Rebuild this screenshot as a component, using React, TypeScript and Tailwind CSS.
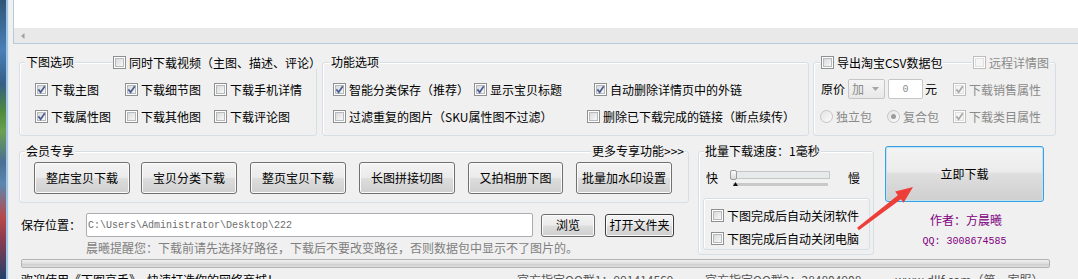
import type { ReactNode } from "react";

const cjk = "font-['Noto_Sans_CJK_SC','Noto_Sans',sans-serif]";
const mono = "font-['Liberation_Mono','DejaVu_Sans_Mono',monospace]";

function Box({ checked = false, disabled = false }: { checked?: boolean; disabled?: boolean }) {
  return (
    <span
      className={`relative block h-[13px] w-[13px] shrink-0 border bg-white p-px ${
        disabled ? "border-[#bdbdbd]" : "border-[#8e8f8f]"
      }`}
    >
      <span
        className={`block h-full w-full border ${
          disabled
            ? "border-[#e0e0e0] bg-[#f5f5f5]"
            : "border-[#b6b9bd] bg-[linear-gradient(135deg,#d9dadb,#f8f8f8)]"
        }`}
      />
      {checked && (
        <svg className="absolute left-0 top-0" width="11" height="11" viewBox="0 0 11 11">
          <path
            d="M2.4 5.4 L4.6 8.2 L8.8 2.2"
            fill="none"
            stroke={disabled ? "#a9a9a9" : "#4a5d92"}
            strokeWidth="1.7"
          />
        </svg>
      )}
    </span>
  );
}

function Check({
  label,
  checked,
  disabled,
  className = "",
}: {
  label: string;
  checked?: boolean;
  disabled?: boolean;
  className?: string;
}) {
  return (
    <label
      className={`flex h-[13px] items-center gap-[3px] whitespace-nowrap text-[12px] leading-[13px] ${
        disabled ? "text-[#8a8a8a]" : "text-black"
      } ${className}`}
    >
      <Box checked={checked} disabled={disabled} />
      <span>{label}</span>
    </label>
  );
}

function Radio({ label, checked, className = "" }: { label: string; checked?: boolean; className?: string }) {
  return (
    <label className={`flex h-[13px] items-center gap-[3px] whitespace-nowrap leading-[13px] text-[#8a8a8a] ${className}`}>
      <span className="flex h-[13px] w-[13px] shrink-0 items-center justify-center rounded-full border border-[#c4c4c4] bg-[linear-gradient(135deg,#e4e4e4,#fbfbfb)]">
        {checked && <span className="h-[5px] w-[5px] rounded-full bg-[#9c9c9c]" />}
      </span>
      <span>{label}</span>
    </label>
  );
}

function Group({
  title,
  titleLeft = "left-[5px]",
  className = "",
  extra,
  children,
}: {
  title: ReactNode;
  titleLeft?: string;
  className?: string;
  extra?: ReactNode;
  children?: ReactNode;
}) {
  return (
    <div className={`relative shrink-0 rounded-[3px] border border-[#d5dfe5] shadow-[inset_1px_1px_0_#ffffff] ${className}`}>
      <div className={`absolute -top-[7px] ${titleLeft} whitespace-nowrap bg-[#f0f0f0] px-px leading-[12px]`}>{title}</div>
      {extra}
      {children}
    </div>
  );
}

function Btn({ children, className = "" }: { children: ReactNode; className?: string }) {
  return (
    <button
      className={`flex shrink-0 items-center justify-center whitespace-nowrap rounded-[3px] border bg-[linear-gradient(to_bottom,#f3f3f3_0%,#ebebeb_48%,#dddddd_52%,#cfcfcf_100%)] text-[12px] leading-[12px] text-black shadow-[inset_0_0_0_1px_#fbfbfb] ${className}`}
    >
      {children}
    </button>
  );
}

export default function App() {
  return (
    <div className={`relative flex h-[279px] w-[1078px] overflow-hidden bg-[#f0f0f0] text-[12px] text-black ${cjk}`}>
      {/* desktop edge + window frame */}
      <div className="w-[6px] shrink-0 bg-[linear-gradient(to_bottom,#2f5678_0%,#4a80b8_18%,#355f86_30%,#4f8a3c_40%,#6aa050_47%,#4b6f95_58%,#5a86b0_66%,#b84848_78%,#8a3a50_86%,#23406a_100%)]" />
      <div className="w-[2px] shrink-0 bg-[#a3c6e4]" />
      <div className="w-px shrink-0 bg-[#e3edf5]" />

      <div className="flex min-w-0 flex-1 flex-col">
        {/* list view */}
        <div className="ml-[4px] flex h-[44px] shrink-0 flex-col border-b border-l border-[#b5cadb]">
          <div className="h-[28px] bg-white" />
          <div className="flex h-[15px] items-center bg-[#e9e9e9] pl-[7px]">
            <svg width="4" height="6" viewBox="0 0 4 6">
              <path d="M3.5 0 L0 3 L3.5 6 Z" fill="#a2a2a2" />
            </svg>
          </div>
        </div>

        {/* options */}
        <div className="mt-[18px] flex pl-[10px]">
          <Group
            title="下图选项"
            className="h-[74px] w-[298px]"
            extra={
              <div className="absolute -top-[7px] left-[93px] bg-[#f0f0f0] pr-[3px]">
                <Check label="同时下载视频（主图、描述、评论）" />
              </div>
            }
          >
            <div className="grid grid-cols-[90px_89px_auto] gap-y-[14px] pl-[15px] pt-[20px]">
              <Check label="下载主图" checked />
              <Check label="下载细节图" checked />
              <Check label="下载手机详情" />
              <Check label="下载属性图" checked />
              <Check label="下载其他图" />
              <Check label="下载评论图" />
            </div>
          </Group>

          <Group title="功能选项" titleLeft="left-[7px]" className="ml-[5px] h-[74px] w-[487px]">
            <div className="pl-[10px] pt-[20px]">
              <div className="flex">
                <Check label="智能分类保存（推荐）" checked className="w-[141px]" />
                <Check label="显示宝贝标题" checked className="w-[120px]" />
                <Check label="自动删除详情页中的外链" checked />
              </div>
              <div className="mt-[14px] flex">
                <Check label="过滤重复的图片（SKU属性图不过滤）" className="w-[254px]" />
                <Check label="删除已下载完成的链接（断点续传）" />
              </div>
            </div>
          </Group>

          <Group
            title={<Check label="导出淘宝CSV数据包" />}
            titleLeft="left-[6px]"
            className="ml-[4px] h-[74px] w-[243px]"
            extra={
              <div className="absolute -top-[7px] left-[158px] bg-[#f0f0f0] px-px">
                <Check label="远程详情图" disabled />
              </div>
            }
          >
            <div className="flex h-[20px] items-center pl-[7px] pt-0 mt-[16px]">
              <div className="flex w-[132px] items-center">
                <span className="leading-[12px]">原价</span>
                <div className="ml-[3px] flex h-[20px] w-[37px] items-center justify-between rounded-[2px] border border-[#c6c6c6] bg-[linear-gradient(#f5f5f5,#e8e8e8)] pl-[3px] pr-[5px] text-[#8a8a8a]">
                  <span className="leading-[12px]">加</span>
                  <svg width="7" height="4" viewBox="0 0 7 4">
                    <path d="M0 0 L7 0 L3.5 4 Z" fill="#a6a6a6" />
                  </svg>
                </div>
                <div className={`ml-[3px] flex h-[20px] w-[35px] items-center justify-center rounded-[2px] border border-[#c6c6c6] bg-white text-[10px] text-[#8a8a8a] ${mono}`}>
                  0
                </div>
                <span className="ml-[2px] leading-[12px]">元</span>
              </div>
              <Check label="下载销售属性" checked disabled />
            </div>
            <div className="mt-[11px] flex pl-[6px]">
              <Radio label="独立包" className="w-[67px]" />
              <Radio label="复合包" checked className="w-[66px]" />
              <Check label="下载类目属性" checked disabled />
            </div>
          </Group>
        </div>

        {/* members / speed / download */}
        <div className="mt-[10px] flex items-start pl-[10px]">
          <div className="flex w-[670px] shrink-0 flex-col">
            <Group
              title="会员专享"
              className="mt-[5px] h-[52px]"
              extra={
                <div className="absolute -top-[7px] left-[571px] bg-[#f0f0f0] px-px leading-[12px]">
                  更多专享功能&gt;&gt;&gt;
                </div>
              }
            >
              <div className="flex pl-[14px] pt-[10px]">
                <Btn className="h-[32px] w-[96px] border-[#707070]">整店宝贝下载</Btn>
                <Btn className="ml-[11px] h-[32px] w-[96px] border-[#707070]">宝贝分类下载</Btn>
                <Btn className="ml-[13px] h-[32px] w-[96px] border-[#707070]">整页宝贝下载</Btn>
                <Btn className="ml-[13px] h-[32px] w-[96px] border-[#707070]">长图拼接切图</Btn>
                <Btn className="ml-[13px] h-[32px] w-[95px] border-[#707070]">又拍相册下图</Btn>
                <Btn className="ml-[13px] h-[32px] w-[96px] border-[#707070]">批量加水印设置</Btn>
              </div>
            </Group>

            <div className="mt-[10px] flex h-[24px] items-center pl-[2px]">
              <span className="w-[65px] leading-[12px]">保存位置：</span>
              <div className={`flex h-[24px] w-[447px] items-center rounded-[2px] border border-[#abadb3] bg-white pl-px text-[10px] text-[#6d6d6d] ${mono}`}>
                C:\Users\Administrator\Desktop\222
              </div>
              <Btn className="ml-[8px] h-[23px] w-[54px] border-[#707070]">浏览</Btn>
              <Btn className="ml-[10px] h-[23px] w-[69px] border-[#3c3c3c]">打开文件夹</Btn>
            </div>

            <div className="mt-[5px] pl-[67px] leading-[12px] text-[#7f7f7f]">
              晨曦提醒您：下载前请先选择好路径，下载后不要改变路径，否则数据包中显示不了图片的。
            </div>
          </div>

          <Group title="批量下载速度：1毫秒" className="ml-[9px] mt-[5px] h-[104px] w-[176px]">
            <div className="flex h-[20px] items-start pl-[7px] pt-0 mt-[18px]">
              <span className="mt-[2px] leading-[12px]">快</span>
              <div className="relative ml-[12px] w-[100px] pt-px">
                <div className="h-[8px] border border-[#c6c6c6] bg-[#e7eaea]" />
                <div className="absolute left-0 top-0 h-[10px] w-[7px] rounded-[2px] border border-[#9c9c9c] bg-[linear-gradient(#fdfdfd,#d8d8d8)]" />
                <div className="relative ml-[3px] mt-[4px] h-[3px] w-[95px] bg-[#c9c9c9]">
                  <svg className="absolute -top-px left-0" width="5" height="4" viewBox="0 0 5 4">
                    <path d="M2.5 0 L5 4 L0 4 Z" fill="#111111" />
                  </svg>
                </div>
              </div>
              <span className="ml-[18px] mt-[2px] leading-[12px]">慢</span>
            </div>
            <div className="ml-[4px] mt-[8px] h-[52px] w-[167px] rounded-[3px] border border-[#d5dfe5] shadow-[inset_1px_1px_0_#ffffff]">
              <div className="flex flex-col gap-[10px] pl-[7px] pt-[10px]">
                <Check label="下图完成后自动关闭软件" />
                <Check label="下图完成后自动关闭电脑" />
              </div>
            </div>
          </Group>

          <div className="ml-[11px] flex w-[159px] shrink-0 flex-col">
            <button className="flex h-[56px] items-center justify-center rounded-[3px] border border-[#3aa0dd] bg-[linear-gradient(to_bottom,#f3f3f3_0%,#ececec_45%,#dedede_50%,#cfcfcf_100%)] leading-[12px] text-black shadow-[inset_0_0_0_1px_#bfe3f7]">
              立即下载
            </button>
            <div className="mt-[12px] pl-[3px] text-center leading-[12px] text-[#800080]">作者：方晨曦</div>
            <div className={`mt-[10px] text-center text-[10px] leading-[12px] text-[#800080] ${mono}`}>
              QQ: 3008674585
            </div>
          </div>
        </div>

        {/* progress */}
        <div className="ml-[12px] mt-[4px] h-[9px] w-[1029px] shrink-0 rounded-[2px] border border-[#b2b2b2] bg-[linear-gradient(#f1f1f1,#dddddd_50%,#cdcdcd_55%,#dedede)]" />

        {/* status */}
        <div className="mt-[4px] flex pl-[12px] leading-[16px]">
          <span className="w-[496px] shrink-0">欢迎使用《下图高手》，快速打造你的网络商城！</span>
          <span className="w-[188px] shrink-0 text-[#555555]">官方指定QQ群1：991414569</span>
          <span className="w-[190px] shrink-0 text-[#555555]">官方指定QQ群2：284804908</span>
          <span className="shrink-0 text-[#555555]">www.dllf.com（第一家服）</span>
        </div>
      </div>

      {/* red annotation arrow */}
      <svg className="pointer-events-none absolute left-0 top-0" width="1078" height="279" viewBox="0 0 1078 279">
        <polygon
          points="858.9,230.2 900.9,199.2 903.6,202.8 913,187 895.2,191.6 897.9,195.2 857.1,227.8"
          fill="#ee3e3a"
        />
      </svg>
    </div>
  );
}
